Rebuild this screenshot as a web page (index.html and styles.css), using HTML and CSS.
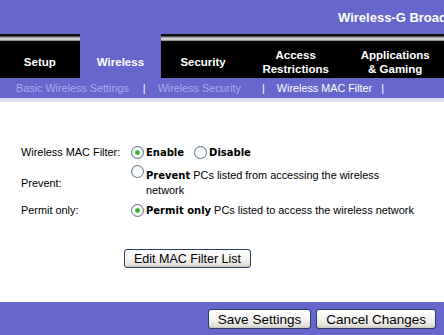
FILE: index.html
```html
<!DOCTYPE html>
<html lang="en">
<head>
    <meta charset="UTF-8">
    <title>Wireless MAC Filter</title>
    <link rel="stylesheet" href="styles.css">
</head>
<body>
    <div class="page">
        <div class="header">
            <span class="product-name">Wireless-G Broadband Router</span>
        </div>

        <div class="tabs">
            <div class="tab tab-setup">Setup</div>
            <div class="tab tab-wireless active">Wireless</div>
            <div class="tab tab-security">Security</div>
            <div class="tab tab-access">Access<br>Restrictions</div>
            <div class="tab tab-apps">Applications<br>&amp; Gaming</div>
        </div>

        <div class="subnav">
            <a class="subnav-link">Basic Wireless Settings</a>
            <span class="sep">|</span>
            <a class="subnav-link">Wireless Security</a>
            <span class="sep wide">|</span>
            <a class="subnav-link current">Wireless MAC Filter</a>
            <span class="sep short">|</span>
        </div>

        <div class="content">
            <div class="form-row first">
                <div class="label">Wireless MAC Filter:</div>
                <div class="field">
                    <label class="option"><input type="radio" name="filter" checked><b>Enable</b></label>
                    <label class="option"><input type="radio" name="filter"><b>Disable</b></label>
                </div>
            </div>

            <div class="form-row tall">
                <div class="label">Prevent:</div>
                <div class="field top">
                    <input type="radio" name="mode">
                    <span class="option-text"><b>Prevent</b> PCs listed from accessing the wireless<br>network</span>
                </div>
            </div>

            <div class="form-row">
                <div class="label">Permit only:</div>
                <div class="field">
                    <input type="radio" name="mode" checked>
                    <span class="option-text"><b>Permit only</b> PCs listed to access the wireless network</span>
                </div>
            </div>

            <div class="edit-row">
                <button class="btn">Edit MAC Filter List</button>
            </div>
        </div>

        <div class="footer">
            <button class="btn btn-large">Save Settings</button>
            <button class="btn btn-large">Cancel Changes</button>
        </div>
    </div>
</body>
</html>
```

FILE: styles.css
```css
body {
    margin: 0;
    font-family: "Liberation Sans", Arial, sans-serif;
    background-color: #ffffff;
}
.page {
    width: 444px;
    height: 335px;
    overflow: hidden;
}
.header {
    height: 34px;
    background-color: #6666cc;
    display: flex;
    align-items: center;
    padding-left: 338px;
    white-space: nowrap;
    overflow: hidden;
}
.product-name {
    color: #ffffff;
    font-weight: bold;
    font-size: 13px;
}
.tabs {
    display: flex;
    height: 44px;
}
.tab {
    display: flex;
    align-items: center;
    justify-content: center;
    text-align: center;
    padding-top: 12px;
    box-sizing: border-box;
    color: #ffffff;
    font-weight: bold;
    font-size: 11.5px;
    line-height: 14px;
    background: linear-gradient(to bottom, #111 0, #111 2px, #8a8a8a 3px, #e8e8e8 5px, #777 7px, #000 7px, #000 100%);
}
.tab.active {
    background: #6666cc;
}
.tab-setup { width: 80px; }
.tab-wireless { width: 82px; }
.tab-security { width: 84px; }
.tab-access { width: 102px; }
.tab-apps { width: 98px; }
.subnav {
    height: 20px;
    background-color: #6666cc;
    border-bottom: 4px solid #dcdcee;
    display: flex;
    align-items: center;
    padding-left: 16px;
    font-size: 10.8px;
    white-space: nowrap;
}
.subnav-link {
    color: #a9a9ec;
}
.subnav-link.current {
    color: #ffffff;
}
.sep {
    color: #ffffff;
    margin: 0 12px 0 14px;
}
.sep.wide { margin-left: 21px; }
.sep.short { margin-left: 9px; }
.content {
    height: 200px;
    padding: 42px 0 0 21px;
    box-sizing: border-box;
    font-size: 10.9px;
    color: #000;
}
.form-row {
    display: flex;
    align-items: center;
    min-height: 16px;
}
.form-row.first {
    margin-bottom: 8px;
}
.form-row.tall {
    margin-bottom: 4px;
}
.label {
    width: 110px;
    flex-shrink: 0;
}
.field {
    display: flex;
    align-items: center;
}
.field.top {
    align-items: flex-start;
}
.field.top input[type="radio"] {
    margin-top: -3px;
}
.option {
    display: flex;
    align-items: center;
    margin-right: 10px;
}
.option b, .option-text b {
    font-family: "DejaVu Sans", Verdana, sans-serif;
    font-size: 10px;
}
.option-text {
    width: 272px;
    line-height: 15px;
}
input[type="radio"] {
    appearance: none;
    width: 13px;
    height: 13px;
    margin: 0 2px 0 0;
    flex-shrink: 0;
    border: 1px solid #5b6f8c;
    border-radius: 50%;
    box-sizing: border-box;
    background: radial-gradient(circle at 60% 65%, #ffffff 0, #ffffff 40%, #dcdcd4 100%);
}
input[type="radio"]:checked {
    background: radial-gradient(circle, #25a125 0, #4fc24f 2px, #ffffff 3px, #ffffff 50%, #dcdcd4 100%);
}
.edit-row {
    margin-top: 31px;
    padding-left: 103px;
}
.btn {
    font-family: "Liberation Sans", Arial, sans-serif;
    font-size: 12.5px;
    color: #000;
    height: 19px;
    padding: 0 9px;
    border: 1px solid #2d3d5c;
    border-radius: 3px;
    background: linear-gradient(to bottom, #ffffff 0, #f4f4f2 50%, #e4e2dc 85%, #c9c6bd 100%);
}
.footer {
    height: 33px;
    background-color: #6666cc;
    display: flex;
    justify-content: flex-end;
    gap: 5px;
    padding: 7px 8px 0 0;
    box-sizing: border-box;
}
.btn-large {
    font-size: 13.5px;
    height: 20px;
    padding: 0 9px;
}
```
